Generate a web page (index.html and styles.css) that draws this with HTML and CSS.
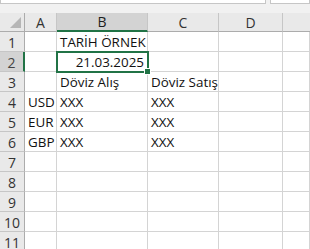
FILE: index.html
```html
<!DOCTYPE html>
<html lang="en">
<head>
    <meta charset="UTF-8">
    <title>Sheet</title>
    <link rel="stylesheet" href="styles.css">
</head>
<body>
    <div class="topbar">
        <div class="box box-name"></div>
        <div class="box box-formula"></div>
    </div>

    <div class="sheet">
        <div class="hd corner"><span class="tri"></span></div>
        <div class="hd col">A</div>
        <div class="hd col sel-col">B</div>
        <div class="hd col">C</div>
        <div class="hd col">D</div>
        <div class="hd col last"></div>

        <div class="hd row">1</div>
        <div class="cell"></div>
        <div class="cell">TARİH ÖRNEK</div>
        <div class="cell"></div>
        <div class="cell"></div>
        <div class="cell"></div>

        <div class="hd row sel-row">2</div>
        <div class="cell"></div>
        <div class="cell num active">21.03.2025<span class="handle"></span></div>
        <div class="cell"></div>
        <div class="cell"></div>
        <div class="cell"></div>

        <div class="hd row">3</div>
        <div class="cell"></div>
        <div class="cell">Döviz Alış</div>
        <div class="cell">Döviz Satış</div>
        <div class="cell"></div>
        <div class="cell"></div>

        <div class="hd row">4</div>
        <div class="cell">USD</div>
        <div class="cell">XXX</div>
        <div class="cell">XXX</div>
        <div class="cell"></div>
        <div class="cell"></div>

        <div class="hd row">5</div>
        <div class="cell">EUR</div>
        <div class="cell">XXX</div>
        <div class="cell">XXX</div>
        <div class="cell"></div>
        <div class="cell"></div>

        <div class="hd row">6</div>
        <div class="cell">GBP</div>
        <div class="cell">XXX</div>
        <div class="cell">XXX</div>
        <div class="cell"></div>
        <div class="cell"></div>

        <div class="hd row">7</div>
        <div class="cell"></div><div class="cell"></div><div class="cell"></div><div class="cell"></div><div class="cell"></div>
        <div class="hd row">8</div>
        <div class="cell"></div><div class="cell"></div><div class="cell"></div><div class="cell"></div><div class="cell"></div>
        <div class="hd row">9</div>
        <div class="cell"></div><div class="cell"></div><div class="cell"></div><div class="cell"></div><div class="cell"></div>
        <div class="hd row">10</div>
        <div class="cell"></div><div class="cell"></div><div class="cell"></div><div class="cell"></div><div class="cell"></div>
        <div class="hd row">11</div>
        <div class="cell"></div><div class="cell"></div><div class="cell"></div><div class="cell"></div><div class="cell"></div>
    </div>
</body>
</html>
```

FILE: styles.css
```css
body {
    margin: 0;
    padding: 0;
    background: #fff;
    font-family: "Open Sans", "Liberation Sans", sans-serif;
    overflow: hidden;
}

.topbar {
    height: 13px;
    background: #f1f1f1;
    display: flex;
    gap: 4px;
    align-items: flex-start;
}

.box {
    height: 3px;
    background: #fff;
    border: 1px solid #c6c6c6;
    border-top: none;
}

.box-name {
    width: 264px;
}

.box-formula {
    flex: 1;
}

.sheet {
    display: grid;
    grid-template-columns: 25px 32px 91px 71px 64px 1fr;
    grid-template-rows: 19px;
    grid-auto-rows: 20px;
}

.hd {
    background: #e9e9e9;
    color: #333;
    font-size: 14px;
    box-sizing: border-box;
    display: flex;
    align-items: center;
    justify-content: center;
}

.col {
    border-right: 1px solid #c6c6c6;
    border-bottom: 1px solid #acacac;
}

.col.last {
    border-right: none;
}

.corner {
    position: relative;
    border-right: 1px solid #acacac;
    border-bottom: 1px solid #acacac;
}

.tri {
    position: absolute;
    right: 3px;
    bottom: 3px;
    width: 0;
    height: 0;
    border-left: 11px solid transparent;
    border-bottom: 11px solid #b6b6b6;
}

.row {
    border-right: 1px solid #acacac;
    border-bottom: 1px solid #c6c6c6;
    padding-top: 1px;
}

.sel-col {
    background: #d3d3d3;
    color: #1e1e1e;
    border-bottom: 2px solid #217346;
}

.sel-row {
    background: #d3d3d3;
    color: #444;
    border-right: 2px solid #217346;
}

.cell {
    box-sizing: border-box;
    border-right: 1px solid #d4d4d4;
    border-bottom: 1px solid #d4d4d4;
    font-size: 13.4px;
    color: #111;
    padding: 1px 3px 0;
    white-space: nowrap;
    display: flex;
    align-items: center;
    overflow: visible;
}

.num {
    justify-content: flex-end;
}

.active {
    position: relative;
    outline: 2px solid #217346;
    outline-offset: -1px;
    z-index: 1;
}

.handle {
    position: absolute;
    right: -4px;
    bottom: -4px;
    width: 5px;
    height: 5px;
    background: #217346;
    border: 1px solid #fff;
}
```
